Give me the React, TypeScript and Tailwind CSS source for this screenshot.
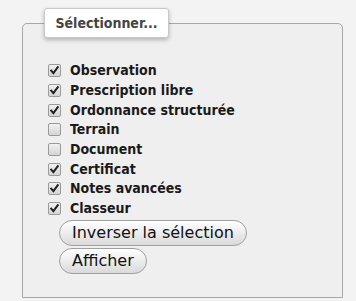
import React from "react";

const items: [string, boolean][] = [
  ["Observation", true],
  ["Prescription libre", true],
  ["Ordonnance structurée", true],
  ["Terrain", false],
  ["Document", false],
  ["Certificat", true],
  ["Notes avancées", true],
  ["Classeur", true],
];

function Box({ checked }: { checked: boolean }) {
  return (
    <span className="w-[13px] h-[13px] rounded-[2px] border border-[#9a9a9a] bg-gradient-to-b from-[#f2f2f2] to-[#d4d4d4] flex items-center justify-center shrink-0">
      {checked && (
        <svg width="11" height="11" viewBox="0 0 11 11">
          <path d="M2.2 5.6 L4.4 8.2 L8.8 2.2" fill="none" stroke="#222" strokeWidth="2" strokeLinecap="square" />
        </svg>
      )}
    </span>
  );
}

const cond = { fontFamily: '"DejaVu Sans Condensed", "DejaVu Sans", sans-serif', fontStretch: "condensed" as const };

export default function App() {
  return (
    <div className="w-[356px] h-[301px] bg-[#f3f3f3] pt-[8px] pl-[22px]" style={{ fontFamily: '"DejaVu Sans", sans-serif' }}>
      <div className="relative z-10 ml-[22px] w-[125px] h-[30px] bg-white border border-[#c8c8c8] rounded-[3px] shadow-[0_2px_4px_rgba(0,0,0,0.25)] flex items-center justify-center text-[14px] font-bold text-[#444]" style={cond}>
        Sélectionner...
      </div>
      <div className="mt-[-15px] w-[321px] h-[275px] border border-[#a8a8a8] rounded-t-[5px] bg-[#efefef] pt-[37px] pl-[25px]">
        <div className="flex flex-col">
          {items.map(([label, c]) => (
            <div key={label} className="flex items-center h-[19.7px] gap-[9px] text-[14px] font-bold text-[#1a1a1a]" style={cond}>
              <Box checked={c} />
              <span>{label}</span>
            </div>
          ))}
        </div>
        <div className="flex flex-col items-start gap-[2px] mt-[1px] ml-[11px]">
          <button className="h-[26px] px-[12px] rounded-[13px] border border-[#a0a0a0] bg-gradient-to-b from-white to-[#dadada] text-[16px] text-[#111] leading-none">
            Inverser la sélection
          </button>
          <button className="h-[26px] px-[12px] rounded-[13px] border border-[#a0a0a0] bg-gradient-to-b from-white to-[#dadada] text-[16px] text-[#111] leading-none">
            Afficher
          </button>
        </div>
      </div>
    </div>
  );
}
